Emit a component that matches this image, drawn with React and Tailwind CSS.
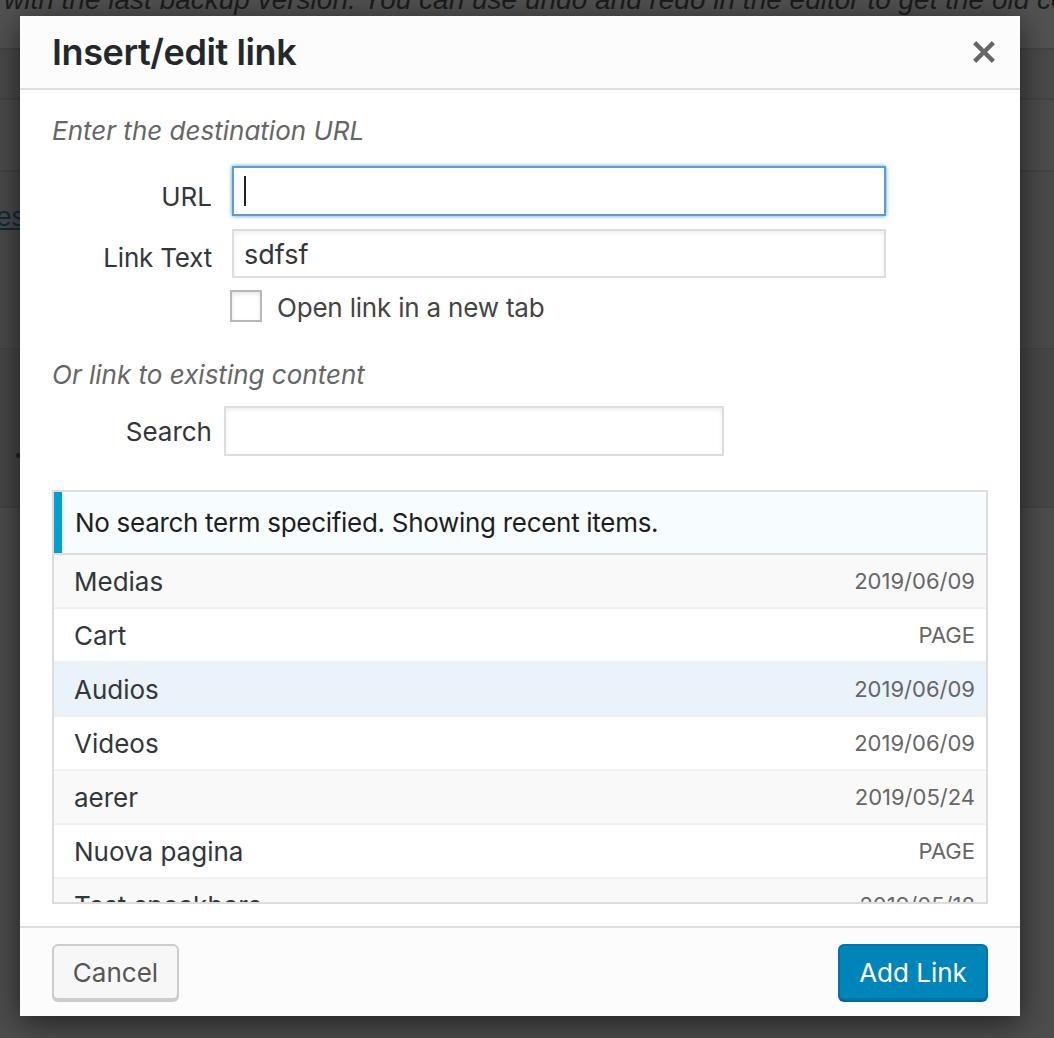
import React from "react";

const items = [
  { title: "Medias", info: "2019/06/09", bg: "bg-[#f9f9f9]" },
  { title: "Cart", info: "PAGE", bg: "bg-white" },
  { title: "Audios", info: "2019/06/09", bg: "bg-[#eaf2fa]" },
  { title: "Videos", info: "2019/06/09", bg: "bg-white" },
  { title: "aerer", info: "2019/05/24", bg: "bg-[#f9f9f9]" },
  { title: "Nuova pagina", info: "PAGE", bg: "bg-white" },
  { title: "Test speakbars", info: "2019/05/18", bg: "bg-[#f9f9f9]" },
];

function CloseIcon() {
  return (
    <svg width="22" height="22" viewBox="5 5 10 10" aria-hidden="true">
      <path
        fill="#666"
        d="M14.95 6.46L11.41 10l3.54 3.54-1.41 1.41L10 11.42l-3.53 3.53-1.42-1.42L8.58 10 5.05 6.47l1.42-1.42L10 8.58l3.54-3.53z"
      />
    </svg>
  );
}

export default function App() {
  return (
    <div className="relative w-[1054px] h-[1038px] overflow-hidden bg-[#4b4b4b] font-['Inter','Noto_Sans',sans-serif] flex flex-col">
      {/* background page (under overlay) */}
      <div className="h-[50px] shrink-0 bg-[#525252] border-b-2 border-[#444] overflow-hidden">
        <p className="mt-[-16px] pl-[4px] whitespace-nowrap italic text-[28px] leading-[32px] text-[#1c1c1c] font-['Liberation_Sans',Arial,sans-serif]">
          with the last backup version. You can use undo and redo in the editor to get the old content
        </p>
      </div>
      <div className="h-[50px] shrink-0 bg-[#4a4a4a] border-b-2 border-[#444]" />
      <div className="h-[72px] shrink-0 bg-[#4c4c4c] border-b-2 border-[#444]" />
      <div className="h-[178px] shrink-0 bg-[#4a4a4a] border-b-2 border-[#444] pt-[28px] overflow-hidden">
        <span className="block ml-[-4px] text-[28px] leading-[34px] underline text-[#0d2b3d] font-['Liberation_Sans',Arial,sans-serif]">
          es
        </span>
      </div>
      <div className="h-[158px] shrink-0 bg-[#474747] border-b-2 border-[#444] pt-[103px] pl-[16px]">
        <div className="w-[5px] h-[5px] rounded-full bg-[#222]" />
      </div>
      <div className="flex-1 bg-[#4d4d4d]" />

      {/* modal */}
      <div className="absolute left-[20px] top-[16px] w-[1000px] h-[1000px] bg-white flex flex-col shadow-[0_6px_30px_rgba(0,0,0,0.6)]">
        <div className="h-[74px] shrink-0 bg-[#fcfcfc] border-b-2 border-[#dddddd] flex items-center justify-between pl-[32px] pr-[25px]">
          <h1 className="text-[36px] leading-[40px] font-semibold text-[#23282d] tracking-[-0.4px]">
            Insert/edit link
          </h1>
          <CloseIcon />
        </div>

        <div className="flex-1 px-[32px] flex flex-col">
          <p className="mt-[23px] h-[36px] leading-[36px] italic text-[26px] text-[#666]">
            Enter the destination URL
          </p>

          <div className="mt-[17px] flex items-center h-[50px]">
            <span className="w-[160px] text-right text-[26px] text-[#32373c] pt-[10px]">URL</span>
            <div className="ml-[20px] w-[654px] h-[50px] border-2 border-[#5b9dd9] shadow-[0_0_4px_rgba(30,140,190,0.8)] bg-white flex items-center pl-[10px]">
              <span className="w-[2px] h-[30px] bg-[#222]" />
            </div>
          </div>

          <div className="mt-[13px] flex items-center h-[49px]">
            <span className="w-[160px] text-right text-[26px] text-[#32373c] pt-[8px] tracking-[-0.2px]">Link Text</span>
            <div className="ml-[20px] w-[654px] h-[49px] border-2 border-[#dddddd] shadow-[inset_0_2px_4px_rgba(0,0,0,0.07)] bg-white flex items-center pl-[10px] pt-[3px] text-[27px] text-[#32373c]">
              sdfsf
            </div>
          </div>

          <div className="mt-[12px] flex items-center h-[32px] pl-[178px]">
            <span className="w-[32px] h-[32px] border-2 border-[#b4b9be] bg-white shadow-[inset_0_2px_4px_rgba(0,0,0,0.1)]" />
            <span className="ml-[15px] pt-[3px] text-[26px] text-[#444] tracking-[-0.2px]">Open link in a new tab</span>
          </div>

          <p className="mt-[35px] h-[36px] leading-[36px] italic text-[26px] text-[#666]">
            Or link to existing content
          </p>

          <div className="mt-[13px] flex items-center h-[50px]">
            <span className="w-[160px] text-right text-[26px] text-[#32373c]">Search</span>
            <div className="ml-[12px] w-[500px] h-[50px] border-2 border-[#dddddd] shadow-[inset_0_2px_4px_rgba(0,0,0,0.07)] bg-white" />
          </div>

          <div className="mt-[34px] h-[414px] border-2 border-[#dddddd] overflow-hidden flex flex-col">
            <div className="h-[63px] shrink-0 bg-[#f7fcfe] border-b-2 border-[#dddddd] flex">
              <span className="w-[8px] bg-[#00a0d2]" />
              <span className="pl-[13px] flex items-center text-[26px] text-[#1e1e1e] tracking-[-0.3px]">
                No search term specified. Showing recent items.
              </span>
            </div>
            {items.map((it) => (
              <div
                key={it.title}
                className={`h-[54px] shrink-0 border-b-2 border-[#f1f1f1] flex items-center justify-between pl-[20px] pr-[11px] ${it.bg}`}
              >
                <span className="text-[26px] text-[#32373c]">{it.title}</span>
                <span className="text-[22px] text-[#666]">{it.info}</span>
              </div>
            ))}
          </div>
        </div>

        <div className="h-[90px] shrink-0 border-t-2 border-[#dddddd] bg-[#fcfcfc] px-[32px] pt-[16px] flex justify-between items-start">
          <button className="w-[127px] h-[56px] rounded-[6px] border-2 border-[#cccccc] bg-[#f7f7f7] shadow-[0_2px_0_#cccccc] text-[26px] text-[#555]">
            Cancel
          </button>
          <button className="w-[150px] h-[56px] rounded-[6px] border-2 border-[#0073aa] bg-[#0085ba] shadow-[0_2px_0_#006799] text-[26px] text-white">
            Add Link
          </button>
        </div>
      </div>
    </div>
  );
}
